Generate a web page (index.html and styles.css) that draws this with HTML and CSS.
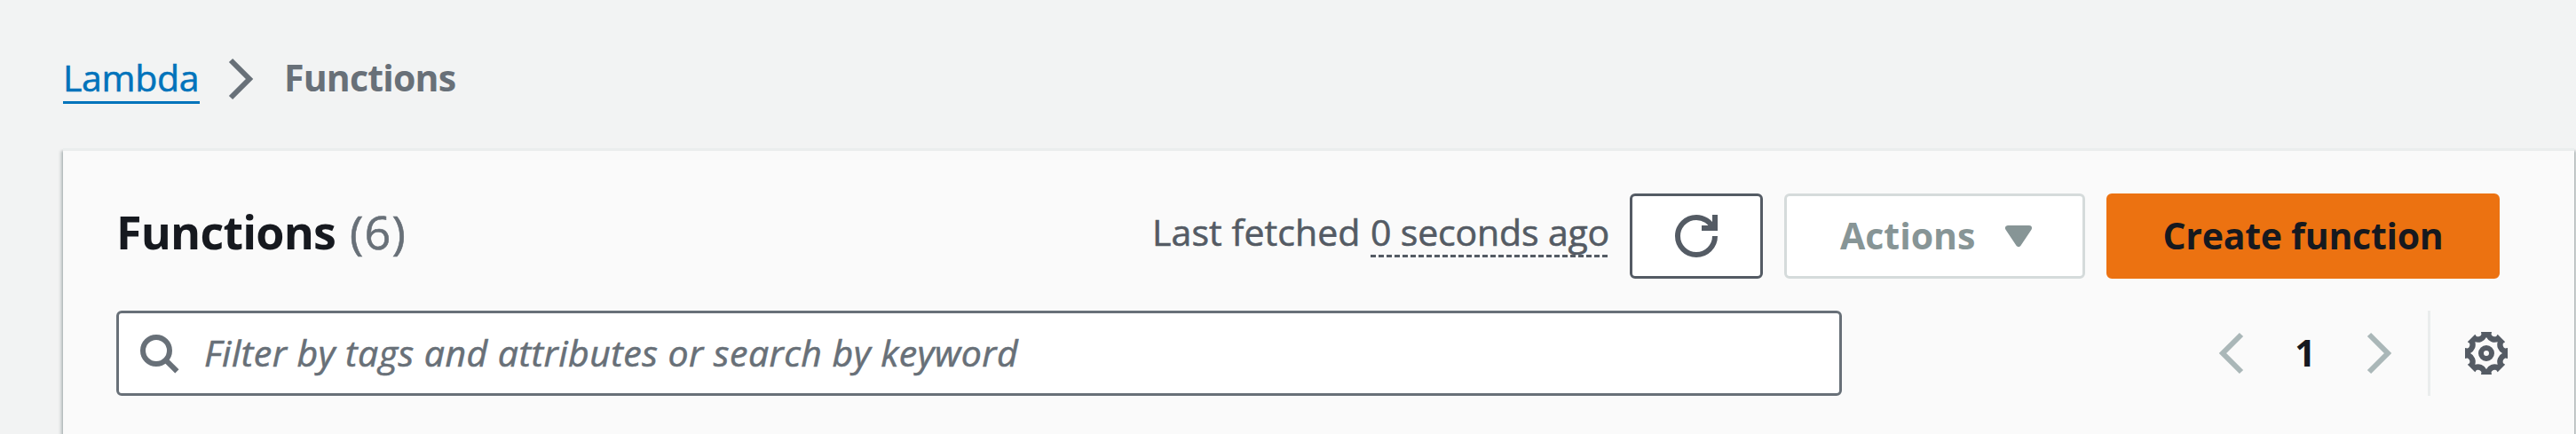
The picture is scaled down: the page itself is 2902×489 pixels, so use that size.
FILE: index.html
```html
<!DOCTYPE html>
<html lang="en">
<head>
<meta charset="utf-8">
<title>Functions - Lambda</title>
<link rel="stylesheet" href="styles.css">
</head>
<body>
<nav class="breadcrumbs">
  <a class="crumb-link" href="#">Lambda</a>
  <svg class="icon crumb-sep" viewBox="0 0 16 16"><path d="M4 1l7 7-7 7"/></svg>
  <span class="crumb-current">Functions</span>
</nav>
<main class="panel">
  <header class="row header">
    <h1 class="title"><span class="title-text">Functions</span><span class="count">(6)</span></h1>
    <div class="actions">
      <p class="fetched"><span class="fetched-label">Last fetched</span><span class="fetched-time">0 seconds ago</span></p>
      <button class="btn btn-refresh" aria-label="Refresh">
        <svg class="icon" viewBox="0 0 16 16"><path d="M10 5h5V0"/><path d="M15 8c0 3.87-3.13 7-7 7s-7-3.13-7-7 3.13-7 7-7c2.79 0 5.2 1.63 6.33 4"/></svg>
      </button>
      <button class="btn btn-actions" disabled><span class="actions-text">Actions</span>
        <svg class="icon caret" viewBox="0 0 16 16"><path d="M4 5h8l-4 6-4-6z"/></svg>
      </button>
      <button class="btn btn-primary"><span class="primary-text">Create function</span></button>
    </div>
  </header>
  <div class="row tools">
    <div class="search">
      <svg class="icon" viewBox="0 0 16 16"><circle cx="7" cy="7" r="5"/><path d="M10.6 10.6l4.2 4.2"/></svg>
      <span class="placeholder">Filter by tags and attributes or search by keyword</span>
    </div>
    <div class="paging">
      <svg class="icon page-arrow" viewBox="0 0 16 16"><path d="M12 1L5 8l7 7"/></svg>
      <span class="page">1</span>
      <svg class="icon page-arrow" viewBox="0 0 16 16"><path d="M4 1l7 7-7 7"/></svg>
      <div class="settings">
        <svg class="icon gear" viewBox="-8 -8 16 16">
          <path class="cog" fill-rule="evenodd" d="M-2-8L2-8 1.85-7.1A1.4 1.4 0 0 0 3.71-6.33L4.24-7.07 7.07-4.24 6.33-3.71A1.4 1.4 0 0 0 7.1-1.85L8-2 8 2 7.1 1.85A1.4 1.4 0 0 0 6.33 3.71L7.07 4.24 4.24 7.07 3.71 6.33A1.4 1.4 0 0 0 1.85 7.1L2 8-2 8-1.85 7.1A1.4 1.4 0 0 0-3.71 6.33L-4.24 7.07-7.07 4.24-6.33 3.71A1.4 1.4 0 0 0-7.1 1.85L-8 2-8-2-7.1-1.85A1.4 1.4 0 0 0-6.33-3.71L-7.07-4.24-4.24-7.07-3.71-6.33A1.4 1.4 0 0 0-1.85-7.1ZM0-6A3.6 3.6 0 0 0 4.24-4.24 3.6 3.6 0 0 0 6 0 3.6 3.6 0 0 0 4.24 4.24 3.6 3.6 0 0 0 0 6 3.6 3.6 0 0 0-4.24 4.24 3.6 3.6 0 0 0-6 0 3.6 3.6 0 0 0-4.24-4.24 3.6 3.6 0 0 0 0-6Z"/>
          <circle r="2"/>
        </svg>
      </div>
    </div>
  </div>
</main>
</body>
</html>
```
FILE: styles.css
```css
* { box-sizing: border-box; }
body {
  margin: 0;
  height: 489px;
  overflow: hidden;
  background: #f2f3f3;
  color: #16191f;
  font: 400 41px/60px "Open Sans", "Noto Sans", sans-serif;
  white-space: nowrap;
}
.icon {
  width: 48px;
  height: 48px;
  flex: none;
  fill: none;
  stroke: currentColor;
  stroke-width: 2;
}
.breadcrumbs {
  display: flex;
  align-items: flex-start;
  height: 167px;
  padding: 57px 0 0 71px;
  color: #687078;
}
.crumb-link {
  width: 154px;
  height: 60px;
  border-bottom: 3px solid #0073bb;
  color: #0073bb;
  letter-spacing: -.3px;
  text-decoration: none;
}
.crumb-link, .count, .fetched, .placeholder { -webkit-text-stroke: .6px currentColor; }
.crumb-sep { margin: 8px 0 0 23px; }
.crumb-current { margin-left: 24px; font-weight: 700; letter-spacing: -.8px; }
.panel {
  width: 2829px;
  height: 322px;
  margin-left: 71px;
  padding: 48px 60px 0;
  border-top: 3px solid #eaeded;
  background: #fafafa;
  box-shadow: 0 3px 3px rgba(0, 28, 36, .3), 3px 3px 3px rgba(0, 28, 36, .15), -3px 3px 3px rgba(0, 28, 36, .15);
}
.row { display: flex; height: 96px; }
.header { justify-content: space-between; padding-right: 24px; }
.title { display: flex; margin: 0; font-size: 52px; line-height: 86px; }
.title-text { width: 263px; letter-spacing: -.8px; }
.count { color: #687078; font-weight: 400; letter-spacing: 1.2px; }
.actions { display: flex; }
.fetched { display: flex; margin: 13px 24px 0 0; color: #545b64; letter-spacing: -.15px; }
.fetched-label { width: 246px; letter-spacing: .1px; }
.fetched-time {
  width: 268px;
  height: 60px;
  background: repeating-linear-gradient(90deg, #545b64 0 6px, transparent 6px 9px) 0 56px / 100% 3px no-repeat;
}
.btn {
  display: flex;
  align-items: center;
  height: 96px;
  padding: 0;
  border: 3px solid #545b64;
  border-radius: 6px;
  background: #fff;
  color: #545b64;
  font: inherit;
  font-weight: 700;
  text-align: left;
}
.btn-refresh { width: 150px; justify-content: center; }
.btn-actions { width: 339px; margin-left: 24px; padding-left: 60px; border-color: #d5dbdb; color: #879596; }
.actions-text { width: 177px; padding-bottom: 3px; }
.caret { fill: currentColor; stroke-linejoin: round; }
.btn-primary { width: 443px; margin-left: 24px; justify-content: center; border-color: #ec7211; background: #ec7211; color: #16191f; }
.primary-text { padding-bottom: 3px; letter-spacing: -.25px; }
.tools { margin-top: 36px; justify-content: space-between; }
.search {
  display: flex;
  align-items: center;
  width: 1944px;
  padding-left: 21px;
  border: 3px solid #687078;
  border-radius: 6px;
  background: #fff;
  color: #687078;
}
.placeholder { margin-left: 27px; padding-bottom: 2px; font-style: italic; letter-spacing: .48px; }
.paging { display: flex; align-items: center; margin-right: 15px; }
.page-arrow { color: #aab7b8; }
.page { width: 120px; padding-bottom: 3px; text-align: center; font-weight: 700; }
.settings { display: flex; align-items: center; height: 96px; margin-left: 30px; padding-left: 39px; border-left: 3px solid #eaeded; color: #545b64; }
.cog { fill: currentColor; stroke: none; }
```
